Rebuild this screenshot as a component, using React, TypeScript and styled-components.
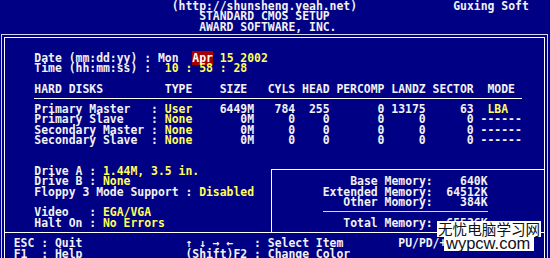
import React from 'react';
import styled, {createGlobalStyle} from 'styled-components';

// text-mode screen: 80 columns x 25 rows squeezed into 550x258
const ROW = 10.32;
const NAVY = '#000084';
const TEXT = '#f2f2f2';
const YELLOW = '#ffff55';

const GlobalStyle = createGlobalStyle`
  html, body {
    margin: 0;
    padding: 0;
    background: ${NAVY};
  }
`;

const Screen = styled.div`
  position: relative;
  width: 550px;
  height: 258px;
  overflow: hidden;
  background: ${NAVY};
  color: ${TEXT};
  font-family: "DejaVu Sans Mono", monospace;
  font-weight: bold;
  font-size: 11.42px;
  /* a little taller than the row so glyphs sit 1px lower, like the VGA font */
  line-height: ${ROW + 2}px;
  white-space: pre;
`;

const Line = styled.div<{$col?: number}>`
  height: ${ROW}px;
  padding-left: ${p => p.$col ?? 0}ch;
`;

const Frame = styled.div`
  box-sizing: border-box;
  width: 547px;
  margin: 3px 0 0 1px;
  padding: 2px;
  border: 1px solid #d4d4ee;
`;

const Panel = styled.div`
  border: 1px solid #ffffff;
`;

const Block = styled.div`
  padding-left: calc(5ch - 5px);
`;

const Top = styled(Block)`
  padding-top: ${ROW * 2 - 7}px;
`;

const Val = styled.span`
  color: ${YELLOW};
`;

const Sel = styled.span`
  background: #a40000;
  color: #ffffff;
`;

const DiskGrid = styled.div`
  display: grid;
  grid-template-columns: 17ch 2ch 8ch 5ch 6ch 5ch 8ch 6ch 7ch 7ch;
  grid-auto-rows: ${ROW}px;
  width: 71ch;
  margin-top: ${ROW}px;
`;

const Cell = styled.span<{$right?: boolean; $indent?: number; $hot?: boolean}>`
  text-align: ${p => (p.$right ? 'right' : 'left')};
  padding-left: ${p => p.$indent ?? 0}ch;
  color: ${p => (p.$hot ? YELLOW : 'inherit')};
`;

const GridRule = styled.div`
  grid-column: 1 / -1;
  height: ${ROW / 2}px;
  border-bottom: 1px solid #ffffff;
`;

const Lower = styled.div`
  display: flex;
  align-items: stretch;
  margin-top: ${ROW}px;
`;

const Settings = styled(Block)`
  box-sizing: border-box;
  flex: none;
  width: 266px;
  padding-top: ${ROW}px;
  padding-bottom: 5px;
`;

const MemoryBox = styled.div`
  flex: 1;
  margin-top: 14.5px;
  padding-top: 5.14px;
  border-top: 1px solid #ffffff;
  border-left: 1px solid #ffffff;
`;

const MemoryRow = styled.div`
  display: grid;
  grid-template-columns: calc(63ch - 272px) 8ch;
  justify-items: end;
  height: ${ROW}px;
`;

const MemoryRule = styled.div`
  width: 24ch;
  margin-left: calc(47ch - 272px);
  height: ${ROW / 2}px;
  margin-bottom: ${ROW / 2 - 1}px;
  border-bottom: 1px solid #d8d8d8;
`;

const Footer = styled.div`
  border-top: 1px solid #ffffff;
  padding: 4.32px 0 3.3px calc(2ch - 5px);
`;

const Watermark = styled.div`
  position: absolute;
  left: 437px;
  top: 221px;
  display: flex;
  flex-direction: column;
  align-items: flex-start;
  white-space: nowrap;
  font-weight: normal;
`;

const MarkCn = styled.span`
  background: #ffffff;
  color: #111111;
  font-family: "Noto Sans CJK SC", sans-serif;
  font-size: 14.6px;
  line-height: 16px;
  padding: 0 1px 0 1px;
`;

const MarkUrl = styled.span`
  margin-left: 7px;
  background: #ffffff;
  color: #101020;
  font-family: "Liberation Sans", Arial, sans-serif;
  font-size: 16.5px;
  line-height: 13px;
  padding: 0 4px 1px 2px;
`;

type Disk = {
  name: string;
  type: string;
  size: string;
  cyls: string;
  head: string;
  precomp: string;
  landz: string;
  sector: string;
  mode?: string;
};

const disks: Disk[] = [
  {name: 'Primary Master', type: 'User', size: '6449M', cyls: '784', head: '255', precomp: '0', landz: '13175', sector: '63', mode: 'LBA'},
  {name: 'Primary Slave', type: 'None', size: '0M', cyls: '0', head: '0', precomp: '0', landz: '0', sector: '0'},
  {name: 'Secondary Master', type: 'None', size: '0M', cyls: '0', head: '0', precomp: '0', landz: '0', sector: '0'},
  {name: 'Secondary Slave', type: 'None', size: '0M', cyls: '0', head: '0', precomp: '0', landz: '0', sector: '0'},
];

const memory = [
  {label: 'Base Memory:', value: '640K'},
  {label: 'Extended Memory:', value: '64512K'},
  {label: 'Other Momory:', value: '384K'},
];

const App = () => {
  return (
    <Screen>
      <GlobalStyle />
      <Line $col={25}>{'(http://shunsheng.yeah.net)' + ' '.repeat(14) + 'Guxing Soft'}</Line>
      <Line $col={29}>STANDARD CMOS SETUP</Line>
      <Line $col={29}>AWARD SOFTWARE, INC.</Line>

      <Frame>
        <Panel>
          <Top>
            <Line>Date (mm:dd:yy) : Mon  <Sel>Apr</Sel> <Val>15 2002</Val></Line>
            <Line>Time (hh:mm:ss) :  <Val>10 : 58 : 28</Val></Line>
          </Top>

          <Block>
            <DiskGrid>
              <Cell>HARD DISKS</Cell>
              <Cell />
              <Cell>TYPE</Cell>
              <Cell>SIZE</Cell>
              <Cell $right>CYLS</Cell>
              <Cell $right>HEAD</Cell>
              <Cell $right>PERCOMP</Cell>
              <Cell $right>LANDZ</Cell>
              <Cell $right>SECTOR</Cell>
              <Cell $indent={2}>MODE</Cell>
              <GridRule />
              {disks.map(d => (
                <React.Fragment key={d.name}>
                  <Cell>{d.name}</Cell>
                  <Cell>:</Cell>
                  <Cell $hot>{d.type}</Cell>
                  <Cell $right>{d.size}</Cell>
                  <Cell $right>{d.cyls}</Cell>
                  <Cell $right>{d.head}</Cell>
                  <Cell $right>{d.precomp}</Cell>
                  <Cell $right>{d.landz}</Cell>
                  <Cell $right>{d.sector}</Cell>
                  {d.mode ? <Cell $indent={2} $hot>{d.mode}</Cell> : <Cell $indent={1}>------</Cell>}
                </React.Fragment>
              ))}
            </DiskGrid>
          </Block>

          <Lower>
            <Settings>
              <Line>Drive A : <Val>1.44M, 3.5 in.</Val></Line>
              <Line>Drive B : <Val>None</Val></Line>
              <Line>Floppy 3 Mode Support : <Val>Disabled</Val></Line>
              <Line />
              <Line>Video   : <Val>EGA/VGA</Val></Line>
              <Line>Halt On : <Val>No Errors</Val></Line>
            </Settings>
            <MemoryBox>
              {memory.map(m => (
                <MemoryRow key={m.label}>
                  <span>{m.label}</span>
                  <span>{m.value}</span>
                </MemoryRow>
              ))}
              <MemoryRule />
              <MemoryRow>
                <span>Total Memory:</span>
                <span>65536K</span>
              </MemoryRow>
            </MemoryBox>
          </Lower>

          <Footer>
            <Line>{'ESC : Quit' + ' '.repeat(15) + '↑ ↓ → ←   : Select Item' + ' '.repeat(8) + 'PU/PD/+/- : Modify'}</Line>
            <Line>{'F1  : Help' + ' '.repeat(15) + '(Shift)F2 : Change Color'}</Line>
          </Footer>
        </Panel>
      </Frame>

      <Watermark>
        <MarkCn>无忧电脑学习网</MarkCn>
        <MarkUrl>wypcw.com</MarkUrl>
      </Watermark>
    </Screen>
  );
};

export default App;
